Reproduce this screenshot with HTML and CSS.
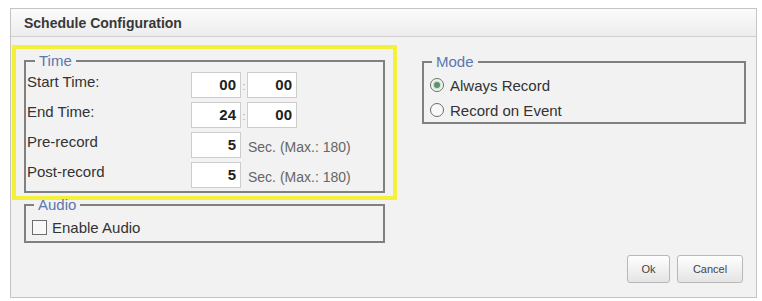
FILE: index.html
```html
<!DOCTYPE html>
<html>
<head>
<meta charset="utf-8">
<link rel="stylesheet" href="styles.css">
</head>
<body>
<div class="dialog">
  <div class="titlebar">Schedule Configuration</div>
  <div class="content">
    <div class="left">
      <div class="highlight">
        <fieldset class="group time">
          <legend>Time</legend>
          <div class="row">
            <span class="label">Start Time:</span>
            <span class="field">00</span><span class="colon">:</span><span class="field">00</span>
          </div>
          <div class="row">
            <span class="label">End Time:</span>
            <span class="field">24</span><span class="colon">:</span><span class="field">00</span>
          </div>
          <div class="row">
            <span class="label">Pre-record</span>
            <span class="field">5</span><span class="unit">Sec. (Max.: 180)</span>
          </div>
          <div class="row">
            <span class="label">Post-record</span>
            <span class="field">5</span><span class="unit">Sec. (Max.: 180)</span>
          </div>
        </fieldset>
      </div>
      <fieldset class="group audio">
        <legend>Audio</legend>
        <div class="option"><span class="checkbox"></span><span>Enable Audio</span></div>
      </fieldset>
    </div>
    <div class="right">
      <fieldset class="group mode">
        <legend>Mode</legend>
        <div class="option"><span class="radio checked"></span><span>Always Record</span></div>
        <div class="option"><span class="radio"></span><span>Record on Event</span></div>
      </fieldset>
    </div>
  </div>
  <div class="footer">
    <button class="btn ok">Ok</button>
    <button class="btn cancel">Cancel</button>
  </div>
</div>
</body>
</html>
```

FILE: styles.css
```css
html, body {
  margin: 0;
  padding: 0;
  background: #ffffff;
}

body {
  font-family: "Liberation Sans", Arial, sans-serif;
  color: #333;
}

.dialog {
  box-sizing: border-box;
  margin: 8px 0 0 10px;
  width: 747px;
  height: 290px;
  border: 1px solid #c4c4c4;
  background: #f2f2f2;
  display: flex;
  flex-direction: column;
}

.titlebar {
  height: 27px;
  border-bottom: 1px solid #d0d0d0;
  background: linear-gradient(#fbfbfb, #ededed);
  padding-left: 13px;
  font-size: 14px;
  font-weight: bold;
  color: #383838;
  line-height: 29px;
}

.content {
  display: flex;
  padding: 8px 0 0 1px;
}

.left {
  width: 385px;
  display: flex;
  flex-direction: column;
}

.right {
  margin-left: 25px;
  width: 324px;
  padding-top: 9px;
}

.highlight {
  border: 4px solid #f3f13c;
  padding: 4px 8px 3px 8px;
}

.group {
  margin: 0;
  padding: 0;
  border: 2px solid #808080;
  min-width: 0;
}

.group legend {
  margin-left: 8px;
  padding: 0 4px;
  font-size: 15px;
  line-height: 16px;
  color: #5b78ae;
}

.time {
  padding: 3px 0 3px 1px;
  display: flex;
  flex-direction: column;
  gap: 4px;
}

.row {
  display: flex;
  align-items: flex-start;
  height: 26px;
}

.label {
  width: 164px;
  font-size: 15px;
  line-height: 20px;
  color: #333;
}

.field {
  box-sizing: border-box;
  width: 50px;
  height: 26px;
  background: #fff;
  border: 1px solid #cdcdcd;
  text-align: right;
  padding-right: 4px;
  font-size: 15px;
  font-weight: bold;
  line-height: 24px;
  color: #222;
}

.colon {
  width: 6px;
  text-align: center;
  font-size: 11px;
  line-height: 28px;
  color: #aaa;
}

.unit {
  margin-left: 7px;
  font-size: 14px;
  line-height: 30px;
  color: #666;
}

.audio {
  margin: -3px 0 0 12px;
  width: 361px;
  box-sizing: border-box;
  padding: 2px 0 2px 0;
}

.option {
  display: flex;
  align-items: center;
  height: 24px;
  font-size: 15px;
  color: #333;
}

.audio .option {
  padding-left: 6px;
}

.checkbox {
  box-sizing: border-box;
  width: 15px;
  height: 15px;
  border: 1px solid #6e6e6e;
  background: #f8f8f8;
  margin-right: 5px;
}

.mode {
  box-sizing: border-box;
  width: 324px;
  padding: 3px 0 0 0;
  display: flex;
  flex-direction: column;
  gap: 1px;
}

.mode .option {
  padding-left: 6px;
}

.radio {
  box-sizing: border-box;
  width: 14px;
  height: 14px;
  border: 1px solid #667066;
  border-radius: 50%;
  background: #f8f8f8;
  margin-right: 6px;
  display: flex;
  align-items: center;
  justify-content: center;
}

.radio.checked::after {
  content: "";
  width: 6px;
  height: 6px;
  border-radius: 50%;
  background: #5f8f6c;
  box-shadow: 0 0 0 1.5px #cfe3d4;
}

.footer {
  margin-top: auto;
  display: flex;
  justify-content: flex-end;
  gap: 7px;
  padding: 0 13px 14px 0;
}

.btn {
  box-sizing: border-box;
  height: 28px;
  border: 1px solid #b8b8b8;
  border-radius: 3px;
  background: linear-gradient(#ffffff, #e4e4e4);
  font-family: "Liberation Sans", Arial, sans-serif;
  font-size: 11px;
  color: #444;
  padding: 0;
}

.ok {
  width: 43px;
}

.cancel {
  width: 66px;
}
```
